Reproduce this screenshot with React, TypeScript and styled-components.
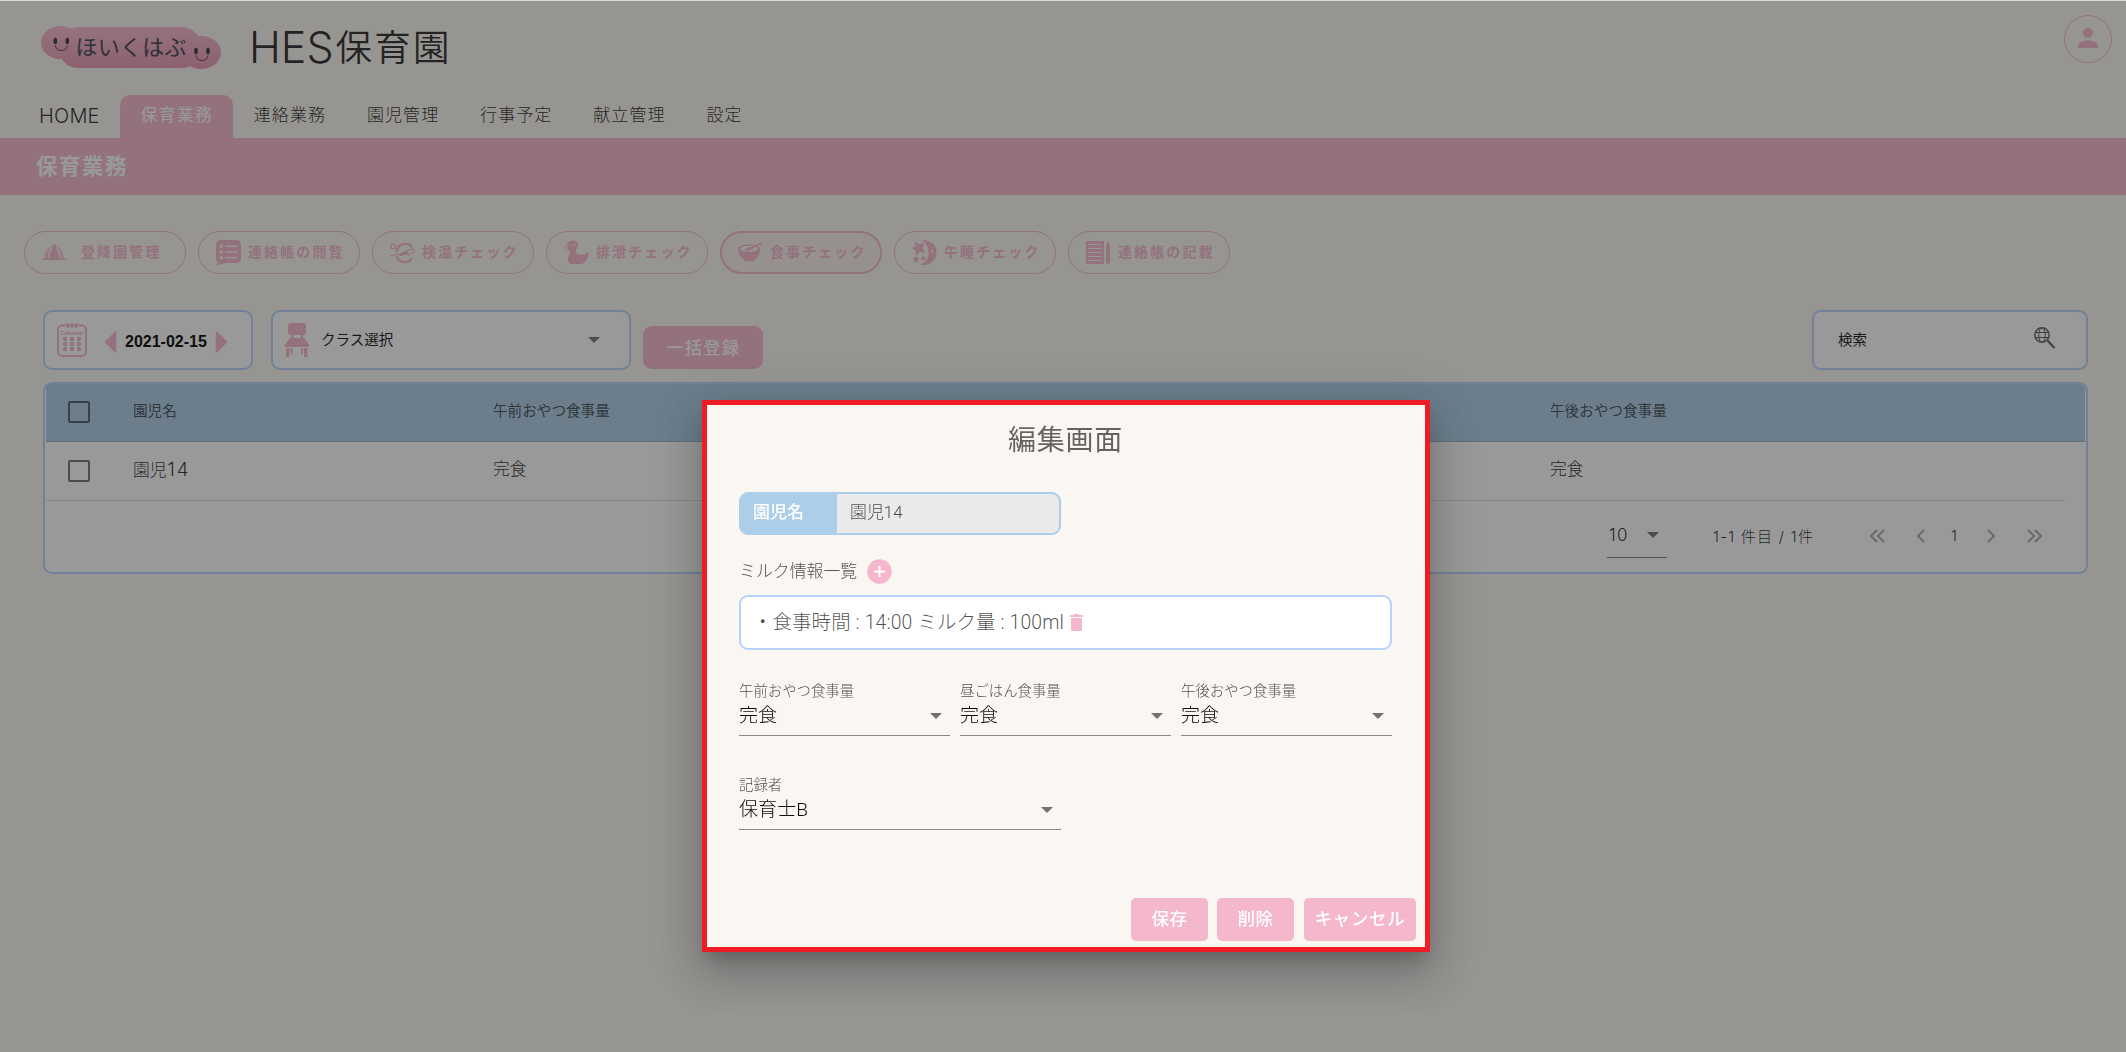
import React from "react";
import styled, { createGlobalStyle, css } from "styled-components";

const PINK = "#f4b7cc";
const BLUE = "#adcee8";
const LINE = "#b8d2ff";
const CREAM = "#faf7f2";

const Global = createGlobalStyle`
  * { box-sizing: border-box; }
  html, body { margin: 0; padding: 0; }
  body {
    background: ${CREAM};
    color: rgba(0, 0, 0, 0.87);
    font-family: Roboto, "Noto Sans CJK JP", sans-serif;
    font-weight: 300;
    overflow: hidden;
  }
`;

const cjk = css`font-family: "Noto Sans CJK JP", sans-serif;`;
const wide = css`font-family: Inter, "Noto Sans CJK JP", sans-serif;`;

const Page = styled.div`
  height: 1052px;
  display: flex;
  flex-direction: column;
  background: ${CREAM};
  ${cjk}
`;

const Header = styled.header`
  display: flex;
  align-items: flex-start;
  height: 95px;
  padding: 15px 14px 0 41px;
`;
const LogoSvg = styled.svg`margin-top: 11px; flex: none; display: block;`;
const SiteTitle = styled.h1`
  margin: 5px 0 0 27px;
  display: flex;
  font-size: 36.5px;
  line-height: 52px;
  font-weight: 350;
  letter-spacing: 2.2px;
  white-space: nowrap;
`;
const Latin = styled.span`
  font-family: Inter, sans-serif;
  font-size: 43px;
  font-weight: 300;
  letter-spacing: 0;
  line-height: 55px;
  margin-right: 2px;
`;
const Avatar = styled.div`
  margin-left: auto;
  width: 48px;
  height: 48px;
  border: 1px solid ${PINK};
  border-radius: 50%;
  display: flex;
  align-items: center;
  justify-content: center;
`;

const Nav = styled.nav`
  display: flex;
  height: 43px;
  padding-left: 19px;
`;
const Tab = styled.a<{ $active?: boolean; $first?: boolean }>`
  ${wide}
  width: ${(p) => (p.$first ? 101 : 113.2)}px;
  padding-left: ${(p) => (p.$first ? 20 : 20.5)}px;
  line-height: ${(p) => (p.$first ? 42 : 41)}px;
  font-size: ${(p) => (p.$first ? 20 : 17)}px;
  letter-spacing: ${(p) => (p.$first ? 0.2 : 1.1)}px;
  white-space: nowrap;
  border-radius: 10px 10px 0 0;
  background: ${(p) => (p.$active ? PINK : "transparent")};
  color: ${(p) => (p.$active ? "#fff" : "rgba(0,0,0,.87)")};
  font-weight: ${(p) => (p.$active ? 400 : 300)};
`;

const Band = styled.div`
  height: 57px;
  padding-left: 36px;
  background: ${PINK};
  color: #fff;
  font-size: 21.5px;
  font-weight: 700;
  line-height: 53px;
  letter-spacing: 1.5px;
`;

const Pills = styled.div`
  display: flex;
  gap: 12px;
  padding: 36px 24px 0;
`;
const Pill = styled.button<{ $active?: boolean; $wide?: boolean }>`
  ${cjk}
  width: 162px;
  height: 43px;
  padding: 0 0 0 ${(p) => (p.$active ? 16 : 17)}px;
  border: ${(p) => (p.$active ? 2 : 1)}px solid ${PINK};
  border-radius: 22px;
  background: ${(p) => (p.$active ? "rgba(244,183,204,.12)" : "transparent")};
  color: ${PINK};
  display: flex;
  align-items: center;
  gap: ${(p) => (p.$wide ? 14 : 7)}px;
  font-size: 14px;
  font-weight: 700;
  letter-spacing: 2.1px;
  white-space: nowrap;
`;
const PillText = styled.span`padding-bottom: 3px;`;

const Toolbar = styled.div`
  display: flex;
  align-items: flex-start;
  padding: 36px 38px 0 43px;
  height: 108px;
`;
const Box = styled.div<{ $w: number }>`
  width: ${(p) => p.$w}px;
  height: 60px;
  border: 2px solid ${LINE};
  border-radius: 9px;
  background: #fff;
  display: flex;
  align-items: center;
  flex: none;
`;
const DateBox = styled(Box)`padding-left: 12px;`;
const DateArrows = styled.div`
  display: flex;
  align-items: center;
  gap: 8px;
  margin: 3px 0 0 17px;
`;
const DateText = styled.b`
  font: 700 16px/20px "Liberation Sans", Arial, sans-serif;
  color: #000;
  white-space: nowrap;
`;
const ClassBox = styled(Box)`margin-left: 18px; padding: 0 29px 0 12px;`;
const BoxText = styled.span<{ $ml: number }>`
  font-size: 14.5px;
  font-weight: 400;
  line-height: 20px;
  margin: -3px auto 0 ${(p) => p.$ml}px;
  color: #111;
`;
const SearchBox = styled(Box)`margin-left: auto; padding-right: 30px;`;
const BulkButton = styled.button`
  ${cjk}
  margin: 16px 0 0 12px;
  width: 120px;
  height: 43px;
  border: 0;
  border-radius: 9px;
  background: ${PINK};
  color: #fff;
  font-size: 17px;
  font-weight: 500;
  letter-spacing: 1.5px;
  padding: 0 0 3px 1px;
`;

const Table = styled.section`
  margin: 0 38px 0 43px;
  height: 192px;
  border: 2px solid ${LINE};
  border-radius: 9px;
  background: #fff;
  padding: 0 1px;
  overflow: hidden;
  ${wide}
`;
const Row = styled.div<{ $head?: boolean }>`
  display: grid;
  grid-template-columns: 87px 360px 1057px 1fr;
  align-items: center;
  height: ${(p) => (p.$head ? 58 : 59)}px;
  margin-right: ${(p) => (p.$head ? 0 : 20)}px;
  background: ${(p) => (p.$head ? BLUE : "transparent")};
  border-bottom: 1px solid ${(p) => (p.$head ? "#96b2cb" : "#dfdfdf")};
  color: ${(p) => (p.$head ? "rgba(0,0,0,.68)" : "rgba(0,0,0,.87)")};
  font-size: ${(p) => (p.$head ? 14.6 : 16.8)}px;
  font-weight: ${(p) => (p.$head ? 400 : 300)};
`;
const Cell = styled.span`padding-bottom: 4px; line-height: 24px; white-space: nowrap;`;
const Digits = styled.span`font-size: 18.5px; letter-spacing: 2px; margin-left: 1px;`;
const Check = styled.i`
  display: block;
  width: 22px;
  height: 22px;
  margin: 0 0 1px 22px;
  border: 2px solid rgba(0, 0, 0, 0.56);
  border-radius: 2px;
`;
const Pager = styled.div`
  display: flex;
  align-items: center;
  padding-left: 1561px;
  height: 69px;
  font-size: 15px;
`;
const PerPage = styled.div`
  width: 60px;
  height: 44px;
  border-bottom: 1px solid rgba(0, 0, 0, 0.5);
  padding: 0 8px 0 2px;
  margin-right: 46px;
  display: flex;
  align-items: center;
  justify-content: space-between;
  font-size: 17px;
  letter-spacing: 1.2px;
`;
const Range = styled.span`
  width: 155px;
  font-size: 15px;
  white-space: nowrap;
  letter-spacing: 1.25px;
`;
const PagerNav = styled.div`
  display: grid;
  grid-template-columns: 47px 36px 35px 40px 20px;
  align-items: center;
`;

const Caret = () => (
  <svg width="12" height="6" viewBox="0 0 12 6">
    <path d="M0 0h12L6 6z" fill="#737270" />
  </svg>
);
const Chevron = ({ double, right }: { double?: boolean; right?: boolean }) => (
  <svg width="18" height="16" viewBox="0 0 18 16" fill="none" stroke="rgba(0,0,0,.34)" strokeWidth="2">
    {right ? (
      <path d={double ? "M2 2l6 6-6 6M9 2l6 6-6 6" : "M2 2l6 6-6 6"} />
    ) : (
      <path d={double ? "M9 2L3 8l6 6M16 2l-6 6 6 6" : "M9 2L3 8l6 6"} />
    )}
  </svg>
);

const Scrim = styled.div`
  position: fixed;
  inset: 0;
  background: rgba(33, 33, 33, 0.46);
  display: flex;
  justify-content: center;
  align-items: flex-start;
  padding: 400px 0 0 6px;
`;
const TopEdge = styled.div`
  position: fixed;
  top: 0;
  left: 0;
  right: 0;
  height: 1px;
  background: #d3dade;
`;
const Dialog = styled.div`
  width: 728px;
  height: 552px;
  border: 5px solid #ee1c25;
  background: ${CREAM};
  padding: 0 33px 0 32px;
  display: flex;
  flex-direction: column;
  color: rgba(0, 0, 0, 0.7);
  box-shadow: 0 11px 15px -7px rgba(0, 0, 0, 0.2), 0 24px 38px 3px rgba(0, 0, 0, 0.14),
    0 9px 46px 8px rgba(0, 0, 0, 0.12);
`;
const DialogTitle = styled.h2`
  ${cjk}
  margin: 13px 0 0;
  height: 74px;
  text-align: center;
  font-size: 28px;
  line-height: 40px;
  font-weight: 400;
  letter-spacing: 0.8px;
  color: rgba(0, 0, 0, 0.6);
`;
const NameField = styled.div`
  width: 322px;
  height: 43px;
  border: 2px solid ${BLUE};
  border-radius: 9px;
  background: #eaeaea;
  display: flex;
  overflow: hidden;
  line-height: 37px;
`;
const NameLabel = styled.span`
  width: 96px;
  background: ${BLUE};
  color: #fff;
  padding-left: 12px;
  font-size: 17px;
  font-weight: 500;
`;
const NameValue = styled.span`padding-left: 13px; font-size: 16.9px;`;
const MilkHead = styled.div`
  display: flex;
  align-items: center;
  height: 24px;
  margin: 24px 0 12px;
  font-size: 16.9px;
  gap: 10px;
`;
const MilkTitle = styled.span`padding-bottom: 4px;`;
const MilkBox = styled.div`
  height: 55px;
  border: 2px solid ${LINE};
  border-radius: 9px;
  background: #fff;
  display: flex;
  align-items: center;
  padding: 0 0 5px 12px;
  font-size: 19.4px;
  letter-spacing: 0.15px;
  white-space: pre;
`;
const Selects = styled.div<{ $top: number }>`
  display: flex;
  gap: 10px;
  margin-top: ${(p) => p.$top}px;
`;
const SelectField = styled.label<{ $w: number }>`
  width: ${(p) => p.$w}px;
  height: 54px;
  border-bottom: 1px solid rgba(0, 0, 0, 0.45);
  display: flex;
  flex-direction: column;
`;
const SelectLabel = styled.span`font-size: 14.4px; line-height: 19px;`;
const SelectValue = styled.span`
  display: flex;
  align-items: center;
  justify-content: space-between;
  padding-right: 8px;
  font-size: 19.1px;
  line-height: 29px;
  color: rgba(0, 0, 0, 0.95);
`;
const Actions = styled.div`
  display: flex;
  margin: auto -24px 6px auto;
  gap: 9px;
`;
const Action = styled.button<{ $w: number }>`
  ${cjk}
  width: ${(p) => p.$w}px;
  height: 43px;
  border: 0;
  border-radius: 5px;
  padding: 0 0 4px;
  background: ${PINK};
  color: #fff;
  font-size: 17.5px;
  font-weight: 500;
  letter-spacing: 0.6px;
  white-space: nowrap;
  &:last-child { margin-left: 1px; }
`;

const Logo = () => (
  <LogoSvg width="181" height="44" viewBox="0 0 181 44">
    <defs>
      <linearGradient id="logoPink" x1="0" y1="0" x2="0" y2="44" gradientUnits="userSpaceOnUse">
        <stop offset="0" stopColor="#f8b9cf" />
        <stop offset="1" stopColor="#e795b1" />
      </linearGradient>
    </defs>
    <g fill="url(#logoPink)">
      <ellipse cx="19.5" cy="16.5" rx="19.5" ry="16.5" />
      <ellipse cx="160" cy="26.5" rx="20" ry="16.5" />
      <rect x="17" y="1" width="144" height="41" rx="20.5" />
    </g>
    <g fill="#32323c">
      <ellipse cx="14.3" cy="15" rx="1.8" ry="3.2" />
      <ellipse cx="26.3" cy="15" rx="1.8" ry="3.2" />
      <ellipse cx="155" cy="25" rx="1.8" ry="3.2" />
      <ellipse cx="167" cy="25" rx="1.8" ry="3.2" />
    </g>
    <g fill="none" stroke="#32323c" strokeWidth="0.9">
      <path d="M14.3 19.5q1 5 6 5t6-5M155 29.5q1 5 6 5t6-5" />
    </g>
    <text x="34.5" y="29" fontFamily="Noto Sans CJK JP" fontSize="22" fontWeight="400" fill="#3e3e4c" textLength="111">
      ほいくはぶ
    </text>
  </LogoSvg>
);

const Icon = ({ w = 25, h = 25, children }: { w?: number; h?: number; children: React.ReactNode }) => (
  <svg width={w} height={h} viewBox={`0 0 ${w} ${h}`} fill={PINK} style={{ flex: "none" }}>
    {children}
  </svg>
);
const HatIcon = () => (
  <Icon>
    <path d="M0 20l2.500-2C3 12 6 7.500 10.500 6L11 4.500h2.500L14 6c4.500 1.500 7.500 6 8 12l2.500 2z" />
    <path d="M10 7Q6.800 12 6.600 18.500M14.500 7q3.200 5 3.400 11.500" fill="none" stroke={CREAM} strokeWidth="1.500" />
    <path d="M3.800 18.500Q4.200 13 7.500 9.500M20.700 18.500Q20.300 13 17 9.500" fill="none" stroke={CREAM} strokeWidth="0.700" />
  </Icon>
);
const ListIcon = () => (
  <Icon>
    <path d="M5 0h15q5 0 5 5v13q0 5-5 5H9Q5 25 0 25l2-2.600Q0 21 0 18V5q0-5 5-5z" />
    <g fill={CREAM}>
      <circle cx="5.300" cy="6.300" r="1.700" /><circle cx="5.300" cy="12" r="1.700" /><circle cx="5.300" cy="17.700" r="1.700" />
      <path d="M9 5.600h12.500V7H9zM9 11.300h12.500v1.500H9zM9 17h12.500v1.500H9z" />
    </g>
  </Icon>
);
const TempIcon = () => (
  <Icon>
    <g fill="none" stroke={PINK}>
      <circle cx="3.200" cy="6.500" r="2.400" strokeWidth="1.200" />
      <path d="M22.500 7A9 9 0 0 0 6.600 12M6.500 16.500a9 9 0 0 0 15.600 1.600" strokeWidth="2.200" />
      <path d="M0 15.800l10-1.600L18 10.200l6-1.200v3.400l-6 2.600" strokeWidth="1.100" />
    </g>
    <path d="M9 14l8-2.400 1.500 2.600L9 16.600z" />
  </Icon>
);
const DuckIcon = () => (
  <Icon>
    <path d="M3.500 8Q2 1 8 .5 14 0 14 5.500 14 8 11.500 9.500 11.500 13 14 14.500 19 16 24.500 12 25 20 18 24H8.500Q4 24 4 19.500 4 15 7 12 4 11 3.500 8z" />
    <circle cx="2.600" cy="8.200" r="2" fill={CREAM} stroke={PINK} strokeWidth="1" />
    <circle cx="6.500" cy="5" r="0.900" fill={CREAM} />
    <circle cx="10.500" cy="5" r="0.900" fill={CREAM} />
  </Icon>
);
const BowlIcon = () => (
  <Icon>
    <ellipse cx="11" cy="9" rx="11" ry="4.500" />
    <path d="M0 9h22q0 7-6 11l-1 1.200H7L6 20Q0 16 0 9z" />
    <ellipse cx="11" cy="8.800" rx="9" ry="3" fill={CREAM} />
    <path d="M11 9L23.500 3.200" stroke={PINK} strokeWidth="1.600" strokeLinecap="round" />
    <path d="M6 9.500l6-2.500 3 1.500-5 2.500z" />
  </Icon>
);
const MoonIcon = () => (
  <Icon>
    <path d="M11.500 0A12.500 12.500 0 0 1 12.500 25Q9.500 25 8 24q8-1.500 8.500-10.500Q16.800 3.500 9.500.5z" />
    <path d="M2 1l5 3.500L12.500 3 10.500 8l3 5-5.500-1-4 4-.5-5.500L-.5 8 4 6.500z" />
    <path d="M4 15.500l1.200 2.400 2.700.2-2 1.900.6 2.700L4 21.500l-2.400 1.200.5-2.700-2-1.900 2.700-.2zM11.500 15.500l.9 1.800 2 .2-1.500 1.400.4 2-1.800-1-1.800 1 .4-2-1.500-1.400 2-.2z" />
    <path d="M19.500 8l.7 2 2 .4-1.600 1.200.2 2-1.600-1.200z" fill={CREAM} />
  </Icon>
);
const NoteIcon = () => (
  <Icon>
    <path d="M0 1h18v23H0z" />
    <path d="M2 4.500h14M2 8.500h14M2 12.500h14M2 16.500h14M2 20.500h14" stroke={CREAM} strokeWidth="1" />
    <path d="M20 6l2-5 2 5v16q0 2-2 2t-2-2z" />
  </Icon>
);
const CalendarIcon = () => (
  <svg width="30" height="34" viewBox="0 0 30 34" fill={PINK}>
    <rect x="1" y="2.500" width="28" height="30.500" rx="4" fill="none" stroke={PINK} strokeWidth="2" />
    <path d="M10 0h2v5h-2zM14 0h2v5h-2zM18 0h2v5h-2z" />
    <text x="3.500" y="12" fontSize="6" fontWeight="700" fontFamily="Noto Sans" textLength="23.500">Calendar</text>
    {[14, 19, 24].map((y) =>
      [6, 13, 20].map((x) => <rect key={`${x}-${y}`} x={x} y={y} width="4" height="4" rx="1.200" />)
    )}
  </svg>
);
const Arrow = ({ right }: { right?: boolean }) => (
  <svg width="13" height="22" viewBox="0 0 12 22" fill={PINK} stroke={PINK} strokeLinejoin="round" strokeWidth="1.500">
    <path d={right ? "M1 1v20l10-10z" : "M11 1v20L1 11z"} />
  </svg>
);
const ChairIcon = () => (
  <svg width="24" height="34" viewBox="0 0 24 34" fill={PINK}>
    <rect x="3" y="0" width="18" height="12" rx="2.500" />
    <path d="M6 12h2.500v4H6zM15.500 12H18v4h-2.500zM5 15h14l4.500 6H.5zM0 21h24v3H0zM1 25h3.500v9H1zM5.500 25h2v6h-2zM16 25h2v6h-2zM19 25h3.500v9H19z" />
  </svg>
);
const GlobeSearch = () => (
  <svg width="22" height="22" viewBox="0 0 22 22" fill="none" stroke="#5c5c5c" style={{ marginTop: -5 }}>
    <circle cx="8" cy="8" r="7.200" strokeWidth="1.500" />
    <ellipse cx="8" cy="8" rx="3.300" ry="7.200" />
    <path d="M1.500 5.500h13M1.500 10.500h13" />
    <path d="M13.500 13.500l7 7.500" strokeWidth="2.200" />
  </svg>
);

const tabs = ["HOME", "保育業務", "連絡業務", "園児管理", "行事予定", "献立管理", "設定"];
const pills: [string, React.FC][] = [
  ["登降園管理", HatIcon],
  ["連絡帳の閲覧", ListIcon],
  ["検温チェック", TempIcon],
  ["排泄チェック", DuckIcon],
  ["食事チェック", BowlIcon],
  ["午睡チェック", MoonIcon],
  ["連絡帳の記載", NoteIcon],
];

const Select = ({ label, value, w = 211 }: { label: string; value: string; w?: number }) => (
  <SelectField $w={w}>
    <SelectLabel>{label}</SelectLabel>
    <SelectValue>{value}<Caret /></SelectValue>
  </SelectField>
);

export default function App() {
  return (
    <>
      <Global />
      <Page>
        <Header>
          <Logo />
          <SiteTitle><Latin>HES</Latin>保育園</SiteTitle>
          <Avatar>
            <svg width="20" height="20" viewBox="0 0 20 20" fill={PINK} style={{ marginTop: -2 }}>
              <circle cx="10" cy="5" r="5" />
              <path d="M0 20v-2.500C0 14 6.700 12.300 10 12.300S20 14 20 17.500V20z" />
            </svg>
          </Avatar>
        </Header>
        <Nav>
          {tabs.map((t, i) => (
            <Tab key={t} $active={i === 1} $first={i === 0}>{t}</Tab>
          ))}
        </Nav>
        <Band>保育業務</Band>
        <Pills>
          {pills.map(([label, Glyph], i) => (
            <Pill key={label} $active={i === 4} $wide={i === 0}>
              <Glyph />
              <PillText>{label}</PillText>
            </Pill>
          ))}
        </Pills>
        <Toolbar>
          <DateBox $w={210}>
            <CalendarIcon />
            <DateArrows>
              <Arrow />
              <DateText>2021-02-15</DateText>
              <Arrow right />
            </DateArrows>
          </DateBox>
          <ClassBox $w={360}>
            <ChairIcon />
            <BoxText $ml={12}>クラス選択</BoxText>
            <Caret />
          </ClassBox>
          <BulkButton>一括登録</BulkButton>
          <SearchBox $w={276}>
            <BoxText $ml={24}>検索</BoxText>
            <GlobeSearch />
          </SearchBox>
        </Toolbar>
        <Table>
          <Row $head>
            <Check />
            <Cell>園児名</Cell>
            <Cell>午前おやつ食事量</Cell>
            <Cell>午後おやつ食事量</Cell>
          </Row>
          <Row>
            <Check />
            <Cell>園児<Digits>14</Digits></Cell>
            <Cell>完食</Cell>
            <Cell>完食</Cell>
          </Row>
          <Pager>
            <PerPage>10<Caret /></PerPage>
            <Range>1-1 件目 / 1件</Range>
            <PagerNav>
              <Chevron double />
              <Chevron />
              <span>1</span>
              <Chevron right />
              <Chevron double right />
            </PagerNav>
          </Pager>
        </Table>
      </Page>
      <Scrim>
        <Dialog>
          <DialogTitle>編集画面</DialogTitle>
          <NameField>
            <NameLabel>園児名</NameLabel>
            <NameValue>園児14</NameValue>
          </NameField>
          <MilkHead>
            <MilkTitle>ミルク情報一覧</MilkTitle>
            <svg width="25" height="25" viewBox="0 0 25 25">
              <circle cx="12.500" cy="12.500" r="12.300" fill={PINK} />
              <path d="M12.500 7v11M7 12.500h11" stroke="#fff" strokeWidth="2" />
            </svg>
          </MilkHead>
          <MilkBox>
            ・食事時間 : 14:00 ミルク量 : 100ml
            <svg width="13" height="17" viewBox="0 0 13 17" fill={PINK} style={{ margin: "5px 0 0 6px" }}>
              <path d="M0 1h3.500l1-1h4l1 1H13v2H0zM1 4h11v11.500q0 1.500-1.500 1.500h-8Q1 17 1 15.500z" />
            </svg>
          </MilkBox>
          <Selects $top={32}>
            <Select label="午前おやつ食事量" value="完食" />
            <Select label="昼ごはん食事量" value="完食" />
            <Select label="午後おやつ食事量" value="完食" />
          </Selects>
          <Selects $top={40}>
            <Select label="記録者" value="保育士B" w={322} />
          </Selects>
          <Actions>
            <Action $w={77}>保存</Action>
            <Action $w={77}>削除</Action>
            <Action $w={112}>キャンセル</Action>
          </Actions>
        </Dialog>
      </Scrim>
      <TopEdge />
    </>
  );
}
